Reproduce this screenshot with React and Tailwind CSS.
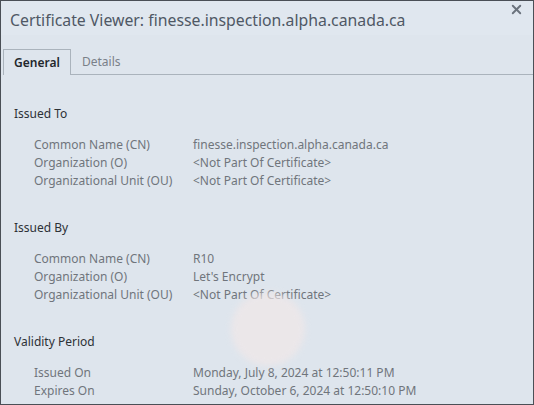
import { X } from 'lucide-react';

const sections = [
  {
    title: 'Issued To',
    rows: [
      ['Common Name (CN)', 'finesse.inspection.alpha.canada.ca'],
      ['Organization (O)', '<Not Part Of Certificate>'],
      ['Organizational Unit (OU)', '<Not Part Of Certificate>'],
    ],
  },
  {
    title: 'Issued By',
    rows: [
      ['Common Name (CN)', 'R10'],
      ['Organization (O)', "Let's Encrypt"],
      ['Organizational Unit (OU)', '<Not Part Of Certificate>'],
    ],
  },
  {
    title: 'Validity Period',
    rows: [
      ['Issued On', 'Monday, July 8, 2024 at 12:50:11 PM'],
      ['Expires On', 'Sunday, October 6, 2024 at 12:50:10 PM'],
    ],
  },
];

const App = () => {
  return (
    <div
      className="relative w-[534px] h-[405px] overflow-hidden border border-[#4a4f56] bg-[#dee5ed]"
      style={{ fontFamily: '"Noto Sans", "Open Sans", sans-serif' }}
    >
      {/* title bar */}
      <div className="h-[34px] bg-[#e0e7ef] pl-[9px] flex items-center">
        <h1 className="text-[15.8px] text-[#4f5865] leading-none pt-[6px]">
          Certificate Viewer: finesse.inspection.alpha.canada.ca
        </h1>
      </div>
      <button className="absolute right-[9px] top-[1px] text-[#6b737d]">
        <X size={15} strokeWidth={3} />
      </button>

      {/* tabs */}
      <div className="mt-[14px] flex items-end pl-[2px]">
        <div className="h-[26px] w-[68px] border border-b-0 border-[#aab3bc] flex items-center justify-center text-[12px] font-semibold text-[#23272c]">
          General
        </div>
        <div className="flex-1 h-[26px] border-b border-[#aab3bc] flex items-center pl-[11px] text-[12px] text-[#7a8089]">
          Details
        </div>
      </div>

      {/* body */}
      <div className="pl-[13px] pt-[1px]">
        {sections.map(section => (
          <div key={section.title} className="pt-[29px]">
            <h2 className="text-[12px] leading-[18px] text-[#2d3136]">{section.title}</h2>
            <div className="mt-[13px] pl-[20px]">
              {section.rows.map(([label, value]) => (
                <div key={label} className="flex text-[12px] leading-[18px] text-[#70757c]">
                  <div className="w-[159px]">{label}</div>
                  <div>{value}</div>
                </div>
              ))}
            </div>
          </div>
        ))}
      </div>

      {/* glare spot */}
      <div className="absolute left-[230px] top-[291px] w-[74px] h-[74px] rounded-full bg-[#f1e8e8] opacity-70 blur-[3px] pointer-events-none" />
    </div>
  );
};

export default App;
